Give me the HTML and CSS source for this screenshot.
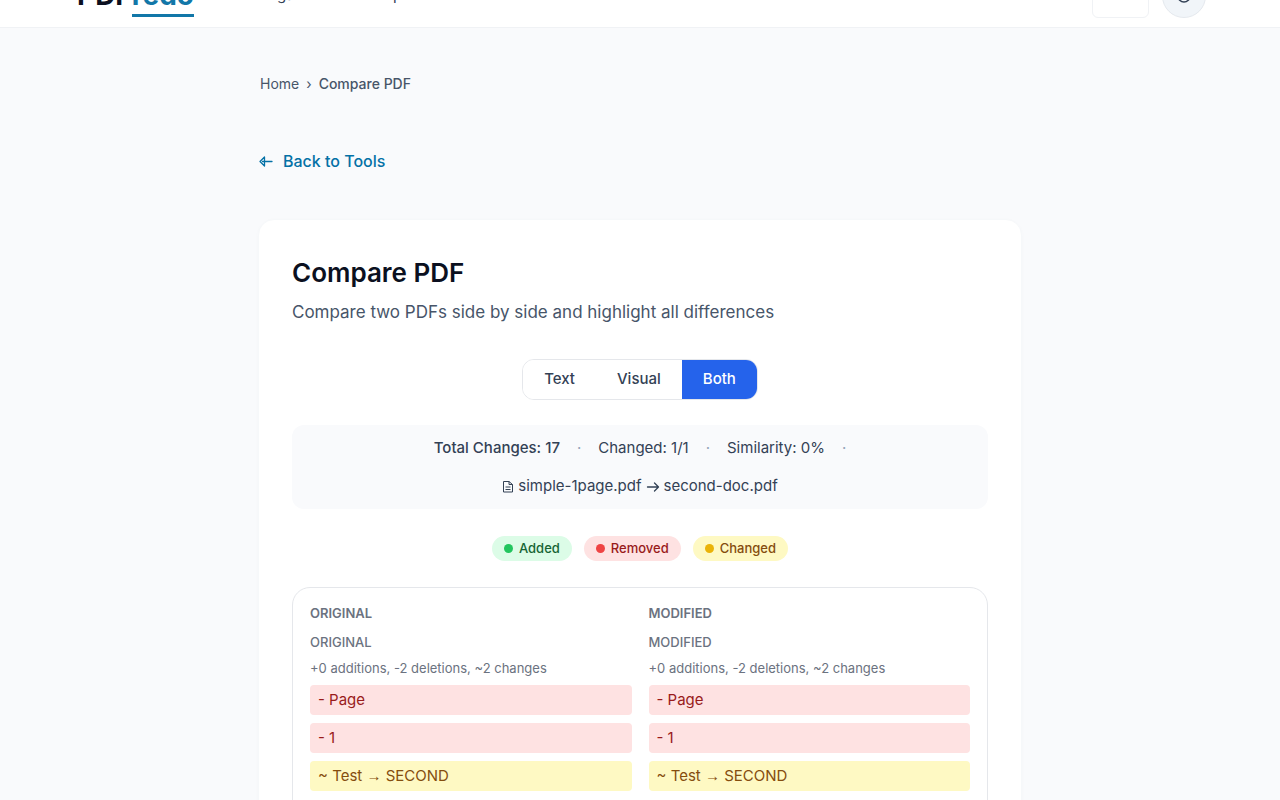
FILE: index.html
```
<!DOCTYPE html>
<html lang="en">
<head>
    <meta charset="UTF-8">
    <meta name="viewport" content="width=device-width, initial-scale=1.0">
    <title>Compare PDF - PDFredo</title>
    <link rel="stylesheet" href="styles.css">
</head>
<body>
    <header class="site-header">
        <a class="logo" href="#">PDF<span>redo</span></a>
        <nav class="main-nav">
            <a href="#">Organize</a>
            <a href="#">Compress PDF</a>
            <a href="#">Convert</a>
            <a href="#">Protect PDF</a>
            <a href="#">All Tools</a>
        </nav>
        <div class="header-actions">
            <button class="lang-button" type="button" aria-label="Language"></button>
            <button class="theme-button" type="button" aria-label="Toggle theme">
                <svg width="18" height="18" viewBox="0 0 18 18" fill="none" stroke="#334155" stroke-width="1.5"><circle cx="9" cy="9" r="6"/></svg>
            </button>
        </div>
    </header>

    <main class="container">
        <nav class="breadcrumb" aria-label="Breadcrumb">
            <a href="#">Home</a>
            <span>›</span>
            <strong>Compare PDF</strong>
        </nav>

        <a class="back-link" href="#">
            <svg width="15" height="16" viewBox="0 0 15 16" fill="none" stroke="currentColor" stroke-width="1.3" stroke-linejoin="round" stroke-linecap="round"><path d="M6.500 4L2 8.500 6.500 13zM4.500 8.500H14"/></svg>
            Back to Tools
        </a>

        <section class="card">
            <h1>Compare PDF</h1>
            <p class="subtitle">Compare two PDFs side by side and highlight all differences</p>

            <div class="mode-toggle">
                <button type="button">Text</button>
                <button type="button">Visual</button>
                <button type="button" class="active">Both</button>
            </div>

            <div class="summary">
                <strong>Total Changes: 17</strong>
                <span class="dot">·</span>
                <span>Changed: 1/1</span>
                <span class="dot">·</span>
                <span>Similarity: 0%</span>
                <span class="dot">·</span>
                <span class="files">
                    <svg width="12" height="14" viewBox="0 0 12 14" fill="none" stroke="currentColor" stroke-linejoin="round"><path d="M1.500 2.500h5.500l3.500 3v7.500h-9zM7 2.500V5.500h3.500M3.500 8h5M3.500 10.500h5"/></svg>
                    simple-1page.pdf
                    <svg width="14" height="12" viewBox="0 0 14 12" fill="none" stroke="currentColor" stroke-width="1.3" stroke-linecap="round" stroke-linejoin="round"><path d="M1.500 7h11M8.500 3l4 4-4 4"/></svg>
                    second-doc.pdf
                </span>
            </div>

            <div class="legend">
                <span class="pill added">Added</span>
                <span class="pill removed">Removed</span>
                <span class="pill changed">Changed</span>
            </div>

            <div class="diff">
                <div class="diff-column">
                    <h2>Original</h2>
                    <h3>Original</h3>
                    <p class="stats">+0 additions, -2 deletions, ~2 changes</p>
                    <div class="line removed">- Page</div>
                    <div class="line removed">- 1</div>
                    <div class="line changed">~ Test <span class="arrow">→</span> SECOND</div>
                </div>
                <div class="diff-column">
                    <h2>Modified</h2>
                    <h3>Modified</h3>
                    <p class="stats">+0 additions, -2 deletions, ~2 changes</p>
                    <div class="line removed">- Page</div>
                    <div class="line removed">- 1</div>
                    <div class="line changed">~ Test <span class="arrow">→</span> SECOND</div>
                </div>
            </div>
        </section>
    </main>
</body>
</html>
```
FILE: styles.css
```
* {
    box-sizing: border-box;
}

body {
    font-family: Inter, "Liberation Sans", sans-serif;
    margin: 0;
    background-color: #f9fafc;
    color: #334155;
}

a {
    color: inherit;
    text-decoration: none;
}

button {
    font: inherit;
    color: inherit;
    cursor: pointer;
}

h1, h2, h3, p {
    margin: 0;
}

/* Header */
.site-header {
    display: flex;
    align-items: flex-end;
    height: 28px;
    padding: 0 74px;
    overflow: hidden;
    background: white;
    border-bottom: 1px solid #f0f2f5;
}

.logo {
    margin-bottom: 10px;
    padding-left: 3px;
    font-size: 28px;
    line-height: 38px;
    font-weight: 700;
    color: #0b1020;
}

.logo span {
    display: inline-block;
    color: #1277a8;
    border-bottom: 3px solid #1277a8;
}

.main-nav {
    display: flex;
    gap: 36px;
    margin-left: 66px;
    margin-bottom: 22px;
    font-size: 15px;
    line-height: 20px;
    font-weight: 400;
}

.header-actions {
    display: flex;
    align-items: flex-end;
    gap: 13px;
    margin-left: auto;
    margin-bottom: 9px;
}

.lang-button {
    width: 57px;
    height: 40px;
    background: white;
    border: 1px solid #f0f2f5;
    border-radius: 6px;
}

.theme-button {
    display: grid;
    place-items: center;
    width: 44px;
    height: 44px;
    padding: 0;
    background: #f1f5f9;
    border: 1px solid #e5e9ee;
    border-radius: 50%;
}

/* Page */
.container {
    max-width: 764px;
    margin: 0 auto;
    padding: 46px 0 40px;
}

.breadcrumb {
    display: flex;
    gap: 7px;
    padding: 0 2px;
    font-size: 14px;
    line-height: 20px;
    color: #475569;
}

.breadcrumb strong {
    font-weight: 500;
}

.back-link {
    display: inline-flex;
    align-items: center;
    gap: 10px;
    margin: 55px 0 46px;
    font-size: 16px;
    line-height: 24px;
    font-weight: 500;
    color: #0471a6;
}

.card {
    padding: 36px 33px 40px;
    background: white;
    border: 1px solid #f6f8fa;
    border-radius: 16px;
    box-shadow: 0 1px 4px rgba(15, 23, 42, 0.02);
}

.card h1 {
    font-size: 26px;
    line-height: 34px;
    font-weight: 600;
    color: #0b1020;
}

.subtitle {
    margin-top: 8px;
    font-size: 17px;
    line-height: 28px;
    color: #475569;
}

.mode-toggle {
    display: flex;
    width: fit-content;
    margin: 33px auto 25px;
    overflow: hidden;
    border: 1px solid #e5e7eb;
    border-radius: 12px;
}

.mode-toggle button {
    padding: 0 21px 2px;
    border: none;
    background: white;
    font-size: 15px;
    line-height: 37px;
    font-weight: 500;
}

.mode-toggle .active {
    background: #2563eb;
    color: white;
}

.summary {
    display: flex;
    flex-wrap: wrap;
    justify-content: center;
    gap: 14px 17px;
    padding: 11px 120px;
    background: #f9fafc;
    border-radius: 12px;
    font-size: 15px;
    line-height: 24px;
}

.summary strong {
    font-weight: 500;
}

.summary .dot {
    color: #94a3b8;
}

.files {
    display: flex;
    align-items: center;
    gap: 4px;
}

.legend {
    display: flex;
    justify-content: center;
    gap: 12px;
    margin: 27px 0 26px;
}

.pill {
    display: flex;
    align-items: center;
    gap: 6px;
    padding: 0 12px;
    border-radius: 13px;
    font-size: 13px;
    line-height: 25px;
    font-weight: 500;
}

.pill::before {
    content: "";
    width: 9px;
    height: 9px;
    border-radius: 50%;
}

.added {
    background: #dcfce7;
    color: #166534;
}

.removed {
    background: #fee2e2;
    color: #991b1b;
}

.changed {
    background: #fef9c3;
    color: #854d0e;
}

.added::before {
    background: #22c55e;
}

.pill.removed::before {
    background: #ef4444;
}

.pill.changed::before {
    background: #eab308;
}

/* Diff columns */
.diff {
    display: grid;
    grid-template-columns: 1fr 1fr;
    gap: 17px;
    padding: 15px 17px 40px;
    border: 1px solid #e5e7eb;
    border-radius: 18px;
}

.diff-column {
    display: flex;
    flex-direction: column;
    gap: 8px;
}

.diff h2, .diff h3 {
    font-size: 13px;
    line-height: 20px;
    font-weight: 600;
    text-transform: uppercase;
    color: #6b7280;
}

.diff h2 {
    margin-bottom: 2px;
}

.diff h3 {
    line-height: 18px;
    font-weight: 500;
}

.stats {
    font-size: 13px;
    line-height: 18px;
    color: #6b7280;
}

.line {
    padding: 0 8px;
    border-radius: 4px;
    font-size: 15px;
    line-height: 30px;
}

.arrow {
    font-family: "Liberation Sans", sans-serif;
}
```
